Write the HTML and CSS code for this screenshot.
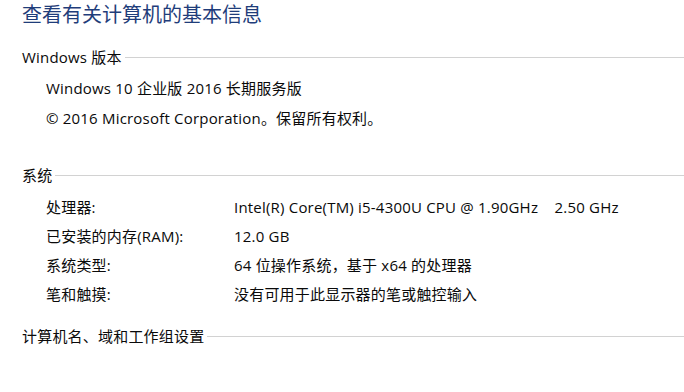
FILE: index.html
```html
<!DOCTYPE html>
<html lang="zh-CN">
<head>
<meta charset="utf-8">
<title>系统</title>
<link rel="stylesheet" href="styles.css">
</head>
<body>
<div class="page">
  <h1 class="title">查看有关计算机的基本信息</h1>

  <div class="section-head"><span class="head-text">Windows 版本</span><span class="rule"></span></div>
  <div class="edition">
    <div class="line">Windows 10 企业版 2016 长期服务版</div>
    <div class="line">© 2016 Microsoft Corporation。保留所有权利。</div>
  </div>

  <div class="section-head sys"><span class="head-text">系统</span><span class="rule"></span></div>
  <div class="props">
    <div class="label">处理器:</div><div class="value">Intel(R) Core(TM) i5-4300U CPU @ 1.90GHz &nbsp;&nbsp; 2.50 GHz</div>
    <div class="label">已安装的内存(RAM):</div><div class="value">12.0 GB</div>
    <div class="label">系统类型:</div><div class="value">64 位操作系统，基于 x64 的处理器</div>
    <div class="label">笔和触摸:</div><div class="value">没有可用于此显示器的笔或触控输入</div>
  </div>

  <div class="section-head last"><span class="head-text">计算机名、域和工作组设置</span><span class="rule"></span></div>
</div>
</body>
</html>
```

FILE: styles.css
```css
html, body {
  margin: 0;
  padding: 0;
  background: #ffffff;
}
body {
  font-family: "Open Sans", "Noto Sans CJK SC", sans-serif;
  font-size: 15px;
  letter-spacing: 0.2px;
  color: #0a0a0a;
}
.page {
  padding-left: 22px;
  width: 662px;
  height: 392px;
  overflow: hidden;
}
.title {
  margin: 0;
  font-weight: normal;
  font-size: 20px;
  letter-spacing: 0;
  line-height: 30px;
  color: #1f3d7a;
}
.section-head {
  display: flex;
  align-items: center;
  height: 20px;
  line-height: 20px;
  margin-top: 17px;
}
.section-head.sys {
  margin-top: 32px;
}
.section-head.last {
  margin-top: 18px;
}
.head-text {
  white-space: nowrap;
}
.rule {
  flex: 1;
  height: 0;
  border-top: 1px solid #d2d2d2;
  margin-left: 3px;
}
.edition {
  margin-top: 6px;
  padding-left: 24px;
}
.line {
  line-height: 30px;
  height: 30px;
}
.props {
  margin-top: 7px;
  padding-left: 24px;
  display: grid;
  grid-template-columns: 188px 1fr;
  grid-auto-rows: 29px;
  align-items: center;
}
.label, .value {
  white-space: nowrap;
}
```
